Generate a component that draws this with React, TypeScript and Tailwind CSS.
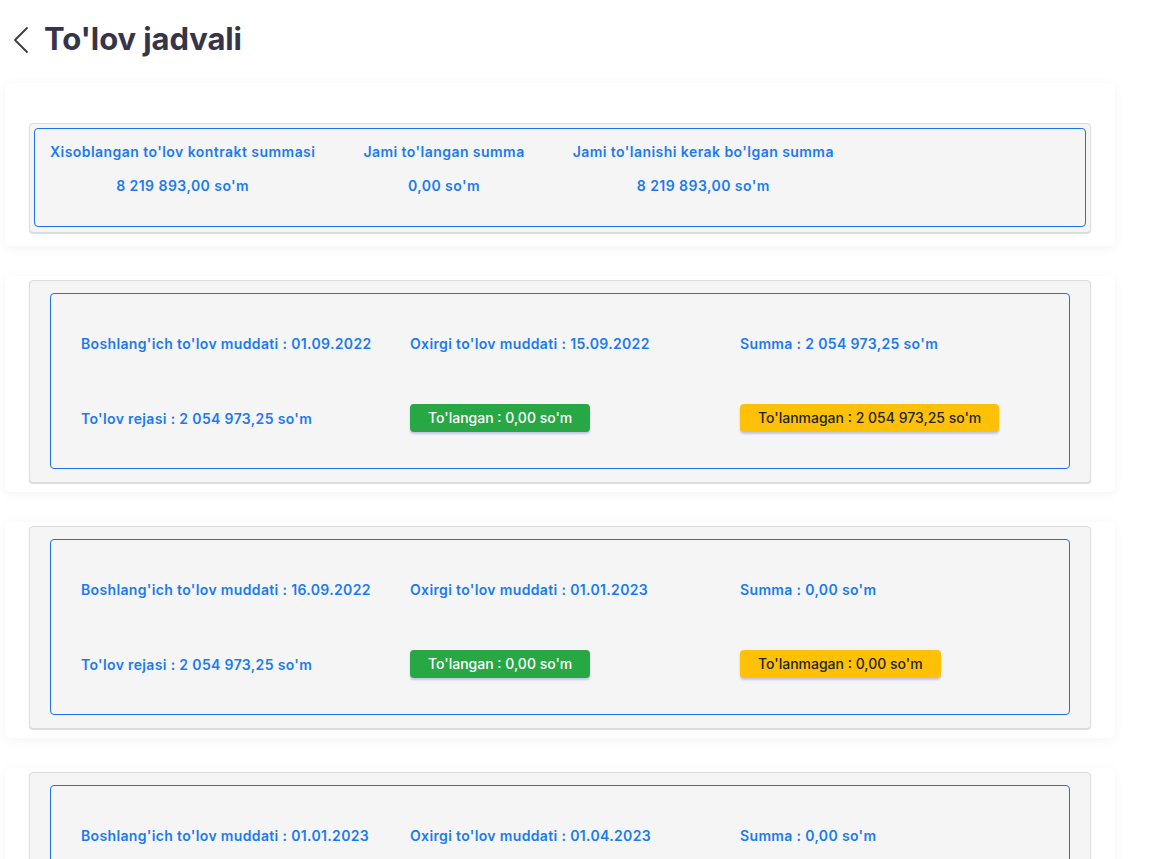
import React from "react";

type Period = {
  start: string;
  end: string;
  summa: string;
  reja: string;
  tolangan: string;
  tolanmagan: string;
};

const periods: Period[] = [
  {
    start: "01.09.2022",
    end: "15.09.2022",
    summa: "2 054 973,25 so'm",
    reja: "2 054 973,25 so'm",
    tolangan: "0,00 so'm",
    tolanmagan: "2 054 973,25 so'm",
  },
  {
    start: "16.09.2022",
    end: "01.01.2023",
    summa: "0,00 so'm",
    reja: "2 054 973,25 so'm",
    tolangan: "0,00 so'm",
    tolanmagan: "0,00 so'm",
  },
  {
    start: "01.01.2023",
    end: "01.04.2023",
    summa: "0,00 so'm",
    reja: "2 054 973,25 so'm",
    tolangan: "0,00 so'm",
    tolanmagan: "0,00 so'm",
  },
];

const totals = [
  { label: "Xisoblangan to'lov kontrakt summasi", value: "8 219 893,00 so'm" },
  { label: "Jami to'langan summa", value: "0,00 so'm" },
  { label: "Jami to'lanishi kerak bo'lgan summa", value: "8 219 893,00 so'm" },
];

const PeriodCard: React.FC<{ p: Period }> = ({ p }) => {
  return (
    <div className="rounded-md bg-white px-6 pt-1 pb-[9px] shadow-[0_2px_12px_rgba(0,0,0,0.05)]">
      <div className="rounded border border-[#dcdcdc] bg-[#f5f5f5] px-5 pt-3 pb-[13px] shadow-[0_1px_1px_rgba(0,0,0,0.15)]">
        <div className="rounded-sm border border-[#1a73e8] px-[30px] py-3 text-sm font-semibold tracking-[0.35px] text-[#1a7bf0]">
          {/* Dates and sum */}
          <div className="grid h-[75px] grid-cols-[329px_330px_330px] items-center">
            <div>Boshlang'ich to'lov muddati : {p.start}</div>
            <div>Oxirgi to'lov muddati : {p.end}</div>
            <div>Summa : {p.summa}</div>
          </div>
          {/* Plan and status badges */}
          <div className="grid h-[75px] grid-cols-[329px_330px_330px] items-center">
            <div>To'lov rejasi : {p.reja}</div>
            <div>
              <span className="inline-flex h-7 -translate-y-px items-center rounded bg-[#28a745] px-[18px] font-medium tracking-normal text-white shadow-[0_2px_2px_rgba(90,90,220,0.3)]">
                To'langan : {p.tolangan}
              </span>
            </div>
            <div>
              <span className="inline-flex h-7 -translate-y-px items-center rounded bg-[#ffc107] px-[18px] font-medium tracking-normal text-[#212529] shadow-[0_2px_2px_rgba(90,90,220,0.3)]">
                To'lanmagan : {p.tolanmagan}
              </span>
            </div>
          </div>
        </div>
      </div>
    </div>
  );
};

export default function App() {
  return (
    <div
      className="h-[859px] overflow-hidden bg-white"
      style={{ fontFamily: "Inter, 'Noto Sans', sans-serif" }}
    >
      {/* Header */}
      <div className="flex h-[83px] items-center pl-[12px] pb-1">
        <svg width="18" height="28" viewBox="0 0 18 28" className="mr-[14px]" fill="none">
          <polyline
            points="15,2 3,14 15,26"
            stroke="#3a3a4a"
            strokeWidth="1.8"
            strokeLinecap="round"
            strokeLinejoin="round"
          />
        </svg>
        <h1 className="text-[31px] font-bold tracking-[-0.1px] text-[#35344a]">To'lov jadvali</h1>
      </div>

      <div className="ml-[5px] flex w-[1110px] flex-col gap-[30px]">
        {/* Totals */}
        <div className="rounded-md bg-white px-6 pt-10 pb-[13px] shadow-[0_2px_12px_rgba(0,0,0,0.05)]">
          <div className="rounded border border-[#dcdcdc] bg-[#f5f5f5] p-1 pb-[5px] shadow-[0_1px_1px_rgba(0,0,0,0.15)]">
            <div className="flex h-[99px] gap-12 rounded-sm border border-[#1a73e8] px-[15px] pt-[13px] text-sm font-semibold tracking-[0.45px] text-[#1a7bf0]">
              {totals.map((t) => (
                <div key={t.label} className="flex flex-col items-center gap-[14px]">
                  <div>{t.label}</div>
                  <div>{t.value}</div>
                </div>
              ))}
            </div>
          </div>
        </div>

        {periods.map((p) => (
          <PeriodCard key={p.start} p={p} />
        ))}
      </div>
    </div>
  );
}
